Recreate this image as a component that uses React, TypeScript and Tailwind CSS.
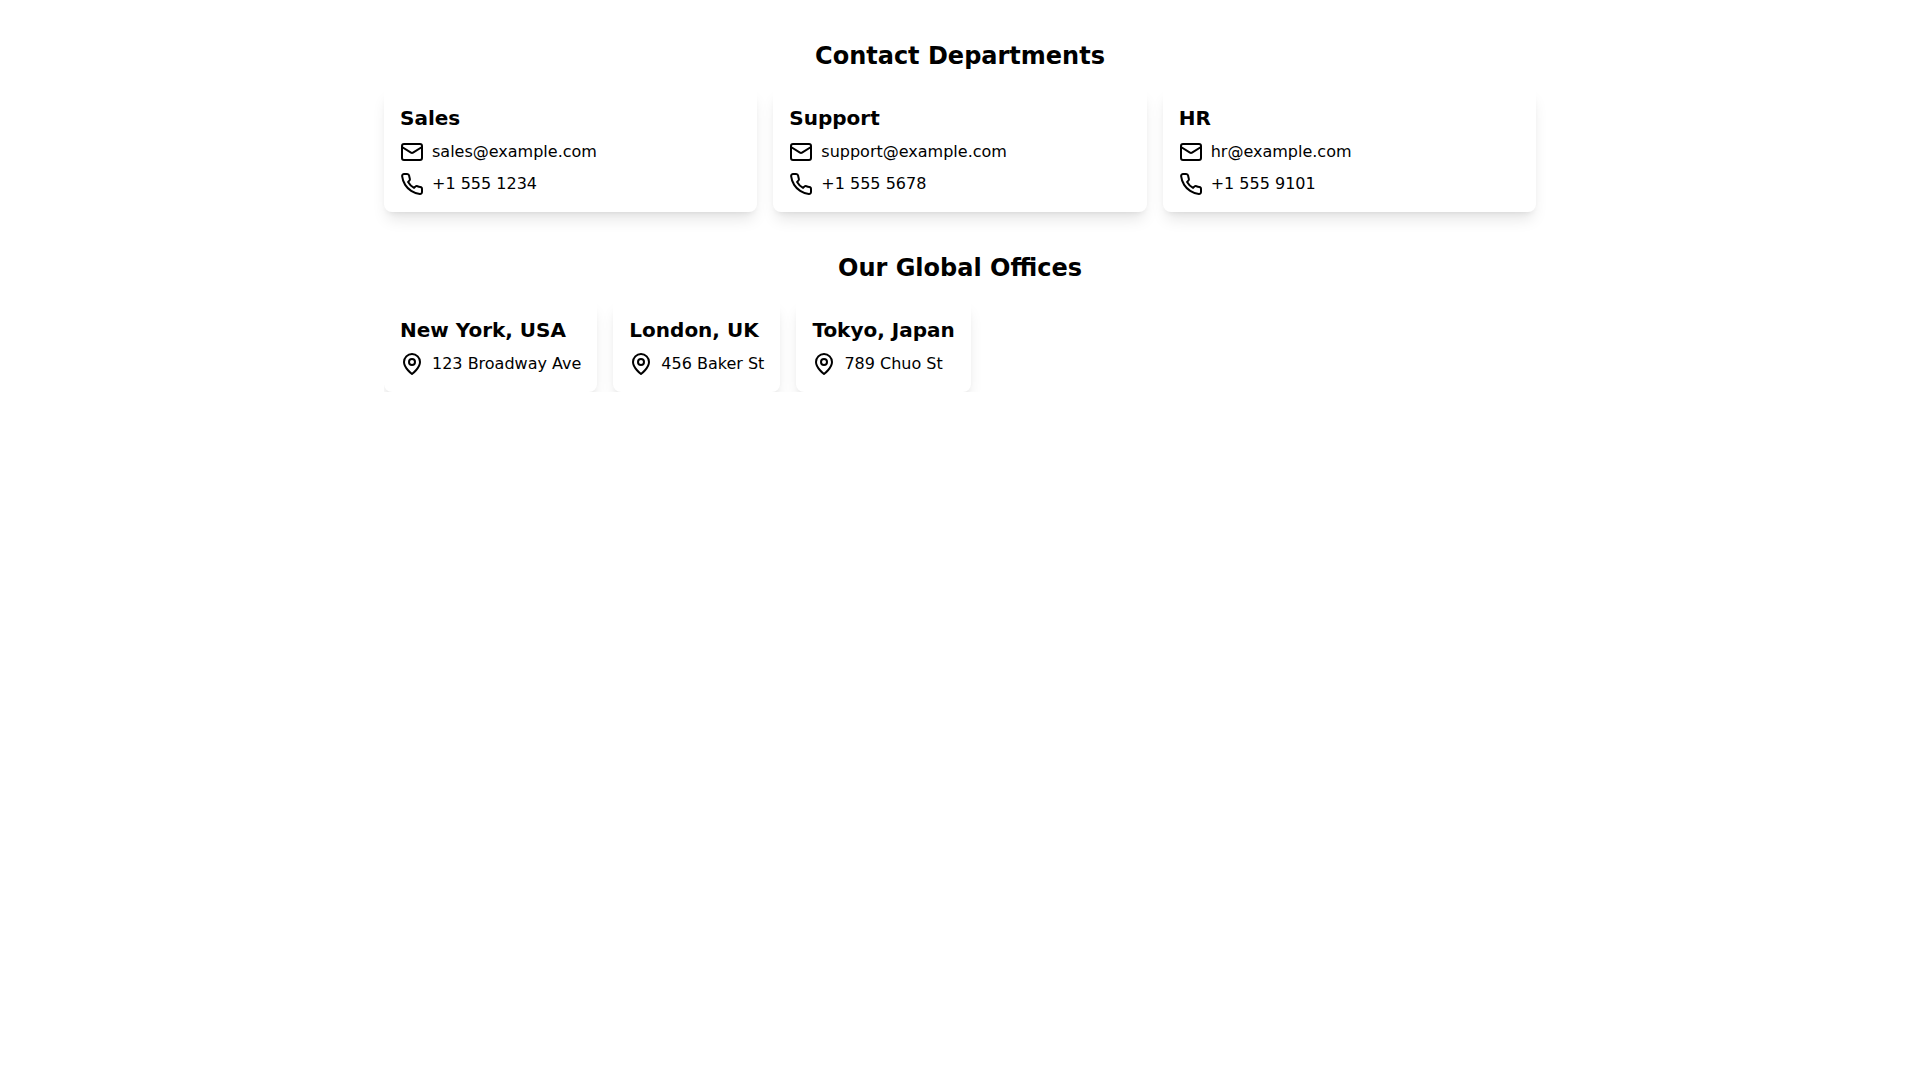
import type { ReactNode } from "react";

const departments = [
  { name: "Sales", email: "sales@example.com", phone: "+1 555 1234" },
  { name: "Support", email: "support@example.com", phone: "+1 555 5678" },
  { name: "HR", email: "hr@example.com", phone: "+1 555 9101" },
];

const offices = [
  { city: "New York, USA", address: "123 Broadway Ave" },
  { city: "London, UK", address: "456 Baker St" },
  { city: "Tokyo, Japan", address: "789 Chuo St" },
];

function Icon({ children }: { children: ReactNode }) {
  return (
    <svg
      aria-hidden="true"
      className="size-6 shrink-0"
      viewBox="0 0 24 24"
      fill="none"
      stroke="currentColor"
      strokeWidth="2"
      strokeLinecap="round"
      strokeLinejoin="round"
    >
      {children}
    </svg>
  );
}

function MailIcon() {
  return (
    <Icon>
      <rect width="20" height="16" x="2" y="4" rx="2" />
      <path d="m22 7-8.97 5.7a1.94 1.94 0 0 1-2.06 0L2 7" />
    </Icon>
  );
}

function PhoneIcon() {
  return (
    <Icon>
      <path d="M22 16.92v3a2 2 0 0 1-2.18 2 19.79 19.79 0 0 1-8.63-3.07 19.5 19.5 0 0 1-6-6 19.79 19.79 0 0 1-3.07-8.67A2 2 0 0 1 4.11 2h3a2 2 0 0 1 2 1.72 12.84 12.84 0 0 0 .7 2.81 2 2 0 0 1-.45 2.11L8.09 9.91a16 16 0 0 0 6 6l1.27-1.27a2 2 0 0 1 2.11-.45 12.84 12.84 0 0 0 2.81.7A2 2 0 0 1 22 16.92z" />
    </Icon>
  );
}

function PinIcon() {
  return (
    <Icon>
      <path d="M20 10c0 6-8 12-8 12s-8-6-8-12a8 8 0 0 1 16 0Z" />
      <circle cx="12" cy="10" r="3" />
    </Icon>
  );
}

export default function App() {
  return (
    <main className="mx-auto max-w-6xl bg-white py-10 font-['DejaVu_Sans',sans-serif] text-black">
      <section>
        <h2 className="mb-4 text-center text-2xl font-bold">Contact Departments</h2>
        <div className="grid grid-cols-1 gap-4 md:grid-cols-3">
          {departments.map((d) => (
            <article key={d.name} className="rounded-lg p-4 shadow-lg">
              <h3 className="text-xl font-bold">{d.name}</h3>
              <p className="mt-2 flex items-center gap-2">
                <MailIcon />
                {d.email}
              </p>
              <p className="mt-2 flex items-center gap-2">
                <PhoneIcon />
                {d.phone}
              </p>
            </article>
          ))}
        </div>
      </section>
      <section className="mt-10">
        <h2 className="mb-4 text-center text-2xl font-bold">Our Global Offices</h2>
        <div className="flex gap-4 overflow-x-auto">
          {offices.map((o) => (
            <article key={o.city} className="shrink-0 rounded-lg p-4 shadow-lg">
              <h3 className="text-xl font-bold">{o.city}</h3>
              <p className="mt-2 flex items-center gap-2">
                <PinIcon />
                {o.address}
              </p>
            </article>
          ))}
        </div>
      </section>
    </main>
  );
}
